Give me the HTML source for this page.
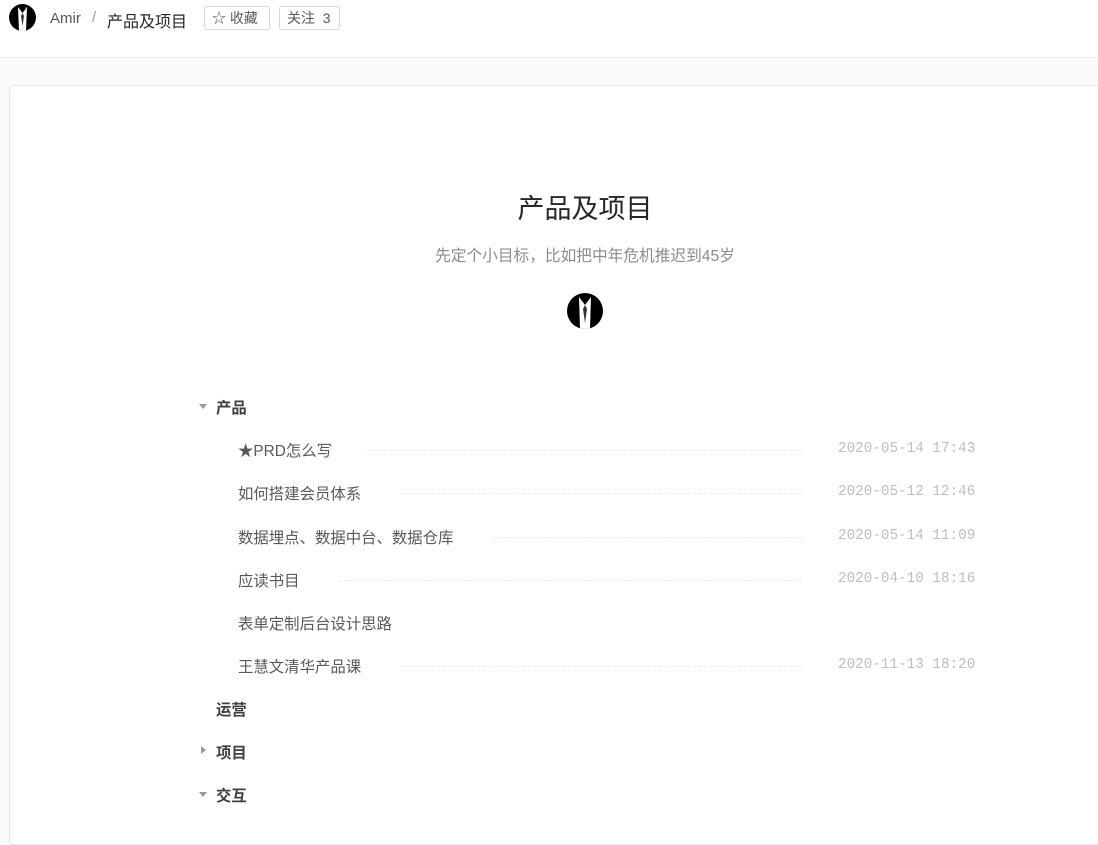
<!DOCTYPE html>
<html><head><meta charset="utf-8"><style>
*{margin:0;padding:0;box-sizing:border-box}
body{width:1098px;height:820px;overflow:hidden;background:#fafafa;font-family:"Liberation Sans","Noto Sans CJK SC",sans-serif;color:#262626;position:relative}
.hdr{position:absolute;left:0;top:0;width:1098px;height:58px;background:#fff;border-bottom:1px solid #ebebeb}
.av{position:absolute;border-radius:50%;background:#000;overflow:hidden}
.card{position:absolute;left:9px;top:85px;width:1100px;height:760px;background:#fff;border:1px solid #e8e8e8;border-radius:4px}
.t{position:absolute;white-space:nowrap}
.btn{position:absolute;top:6px;height:24px;border:1px solid #d9d9d9;border-radius:3px;font-size:14px;line-height:22px;color:#595959;padding:0 7px;white-space:nowrap}
.row{position:absolute;left:238px;font-size:15.4px;color:#595959;white-space:nowrap}
.dot{position:absolute;border-top:1px dashed #ececec;height:0}
.date{position:absolute;left:838px;font-family:"Liberation Mono",monospace;font-size:14.3px;color:#bfbfbf;white-space:nowrap}
.grp{position:absolute;left:216px;font-size:15.4px;font-weight:bold;color:#404040}
.tri{position:absolute;width:0;height:0}
</style></head><body>
<div class="hdr"></div>
<div class="av" style="left:9px;top:4px;width:27px;height:27px"><svg width="27" height="27"><path d="M9 3 L13.5 9 L18 3 L17 27 L10 27Z" fill="#fff"/><path d="M13.5 9 L12 12 L13.5 22 L15 12Z" fill="#333"/></svg></div>
<div class="t" style="left:50px;top:10px;font-size:15px;color:#595959">Amir</div>
<div class="t" style="left:92px;top:9px;font-size:15px;color:#999">/</div>
<div class="t" style="left:107px;top:8px;font-size:16px;color:#262626">产品及项目</div>
<div class="btn" style="left:204px;width:66px">☆ 收藏</div>
<div class="btn" style="left:279px;width:61px">关注&nbsp; 3</div>
<div class="card"></div>
<div class="t" style="left:0;width:1170px;text-align:center;top:187px;font-size:27px;color:#262626">产品及项目</div>
<div class="t" style="left:0;width:1170px;text-align:center;top:243px;font-size:15.7px;color:#8c8c8c">先定个小目标，比如把中年危机推迟到45岁</div>
<div class="av" style="left:567px;top:293px;width:36px;height:36px"><svg width="36" height="36"><path d="M12 4 L18 12 L24 4 L23 36 L13 36Z" fill="#fff"/><path d="M18 12 L16 16 L18 30 L20 16Z" fill="#333"/></svg></div>
<div class="tri" style="left:199px;top:404px;border-left:4px solid transparent;border-right:4px solid transparent;border-top:5px solid #999"></div>
<div class="grp" style="top:396px">产品</div>
<div class="row" style="top:439px">★PRD怎么写</div><div class="dot" style="left:364px;width:438px;top:450px"></div><div class="date" style="top:441px">2020-05-14 17:43</div>
<div class="row" style="top:482px">如何搭建会员体系</div><div class="dot" style="left:402px;width:400px;top:493px"></div><div class="date" style="top:484px">2020-05-12 12:46</div>
<div class="row" style="top:526px">数据埋点、数据中台、数据仓库</div><div class="dot" style="left:494px;width:308px;top:537px"></div><div class="date" style="top:528px">2020-05-14 11:09</div>
<div class="row" style="top:569px">应读书目</div><div class="dot" style="left:339px;width:463px;top:580px"></div><div class="date" style="top:571px">2020-04-10 18:16</div>
<div class="row" style="top:612px">表单定制后台设计思路</div>
<div class="row" style="top:655px">王慧文清华产品课</div><div class="dot" style="left:402px;width:400px;top:666px"></div><div class="date" style="top:657px">2020-11-13 18:20</div>
<div class="grp" style="top:698px">运营</div>
<div class="tri" style="left:201px;top:746px;border-top:4px solid transparent;border-bottom:4px solid transparent;border-left:5px solid #999"></div>
<div class="grp" style="top:741px">项目</div>
<div class="tri" style="left:199px;top:792px;border-left:4px solid transparent;border-right:4px solid transparent;border-top:5px solid #999"></div>
<div class="grp" style="top:784px">交互</div>
</body></html>
